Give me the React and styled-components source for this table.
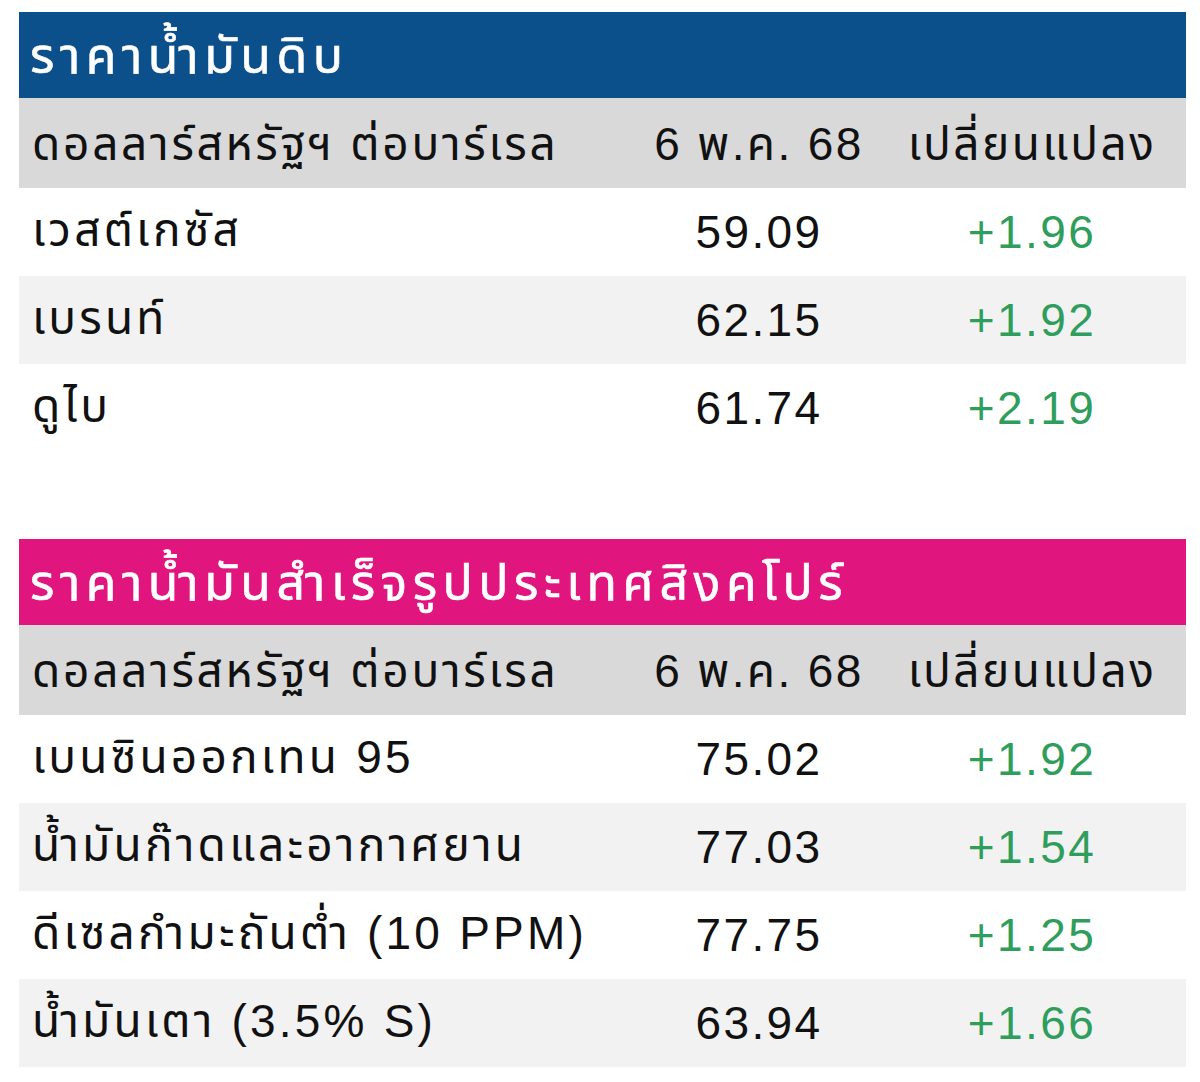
import React from "react";
import styled, { createGlobalStyle } from "styled-components";

const Global = createGlobalStyle`
  html, body { margin: 0; padding: 0; background: #ffffff; }
  body { font-family: "Liberation Sans", "Noto Sans Thai", "Tahoma", sans-serif; }
`;

const Page = styled.div`
  width: 1200px;
  height: 1082px;
  box-sizing: border-box;
  padding: 12px 14px 0 19px;
  display: flex;
  flex-direction: column;
  gap: 87px;
  background: #fff;
`;

const Table = styled.div`
  display: flex;
  flex-direction: column;
  width: 1167px;
`;

const Title = styled.div`
  height: 86px;
  background: ${(p) => p.$bg};
  color: #fff;
  font-size: 50px;
  font-weight: 400;
  letter-spacing: 5.5px;
  -webkit-text-stroke: 0.6px #fff;
  display: flex;
  align-items: center;
  padding-left: 11px;
  padding-top: 6px;
  box-sizing: border-box;
  white-space: nowrap;
`;

const Row = styled.div`
  display: grid;
  grid-template-columns: 621px 238px 308px;
  height: ${(p) => p.$h || 88}px;
  background: ${(p) => p.$bg};
  align-items: center;
  font-size: 46px;
  letter-spacing: 2.4px;
  color: #111;
  padding-top: ${(p) => p.$pt || 0}px;
  box-sizing: border-box;
`;

const Name = styled.div`
  padding-left: 13px;
  white-space: nowrap;
  letter-spacing: ${(p) => p.$ls || 3.2}px;
`;

const Num = styled.div`
  text-align: center;
  white-space: nowrap;
  color: ${(p) => p.$c || "#111"};
`;

const tables = [
  {
    title: "ราคาน้ำมันดิบ",
    bg: "#0b4f8b",
    rows: [
      ["เวสต์เกซัส", "59.09", "+1.96"],
      ["เบรนท์", "62.15", "+1.92"],
      ["ดูไบ", "61.74", "+2.19"],
    ],
  },
  {
    title: "ราคาน้ำมันสำเร็จรูปประเทศสิงคโปร์",
    bg: "#e0167e",
    rows: [
      ["เบนซินออกเทน 95", "75.02", "+1.92"],
      ["น้ำมันก๊าดและอากาศยาน", "77.03", "+1.54"],
      ["ดีเซลกำมะถันต่ำ (10 PPM)", "77.75", "+1.25"],
      ["น้ำมันเตา (3.5% S)", "63.94", "+1.66"],
    ],
  },
];

export default function App() {
  return (
    <Page>
      <Global />
      {tables.map((t) => (
        <Table key={t.title}>
          <Title $bg={t.bg}>{t.title}</Title>
          <Row $bg="#d9d9d9" $h={90} $pt={6}>
            <Name $ls={2.7}>ดอลลาร์สหรัฐฯ ต่อบาร์เรล</Name>
            <Num>6 พ.ค. 68</Num>
            <Num>เปลี่ยนแปลง</Num>
          </Row>
          {t.rows.map((r, i) => (
            <Row key={r[0]} $bg={i % 2 ? "#f2f2f2" : "#ffffff"}>
              <Name>{r[0]}</Name>
              <Num>{r[1]}</Num>
              <Num $c="#2f9e5c">{r[2]}</Num>
            </Row>
          ))}
        </Table>
      ))}
    </Page>
  );
}
